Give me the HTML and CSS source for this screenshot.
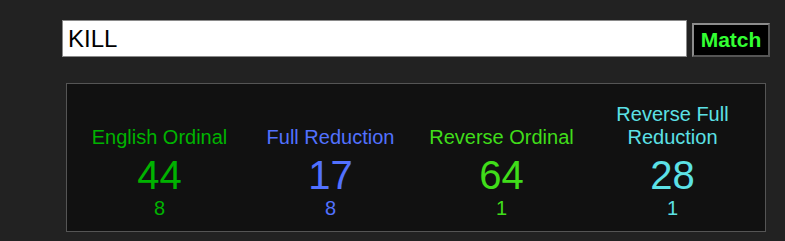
FILE: index.html
```html
<!DOCTYPE html>
<html>
<head>
<meta charset="utf-8">
<link rel="stylesheet" href="styles.css">
</head>
<body>
<div class="page">
  <form class="search">
    <input class="search-input" type="text" value="KILL">
    <button class="match-btn" type="button">Match</button>
  </form>
  <div class="results">
    <div class="grid">
      <div class="label c-eo">English Ordinal</div>
      <div class="label c-fr">Full Reduction</div>
      <div class="label c-ro">Reverse Ordinal</div>
      <div class="label c-rfr">Reverse Full Reduction</div>
      <div class="num c-eo">44</div>
      <div class="num c-fr">17</div>
      <div class="num c-ro">64</div>
      <div class="num c-rfr">28</div>
      <div class="sub c-eo">8</div>
      <div class="sub c-fr">8</div>
      <div class="sub c-ro">1</div>
      <div class="sub c-rfr">1</div>
    </div>
  </div>
</div>
</body>
</html>
```

FILE: styles.css
```css
html, body {
  margin: 0;
  padding: 0;
  background: #222222;
  font-family: "Liberation Sans", Arial, sans-serif;
}
.page {
  padding: 20px 0 0 0;
}
.search {
  display: flex;
  align-items: flex-start;
  margin: 0 0 0 62px;
}
.search-input {
  box-sizing: border-box;
  width: 625px;
  height: 37px;
  margin: 0;
  padding: 0 0 0 5px;
  border: 1px solid #8a8a8a;
  background: #ffffff;
  color: #000000;
  font-family: "Liberation Sans", Arial, sans-serif;
  font-size: 24px;
  outline: none;
}
.match-btn {
  box-sizing: border-box;
  width: 78px;
  height: 34px;
  margin: 3px 0 0 5px;
  padding: 0;
  background: #000000;
  color: #33ff33;
  border: 2px solid;
  border-color: #8c8c8c #555555 #555555 #8c8c8c;
  font-family: "Liberation Sans", Arial, sans-serif;
  font-weight: bold;
  font-size: 21px;
  line-height: 28px;
}
.results {
  box-sizing: border-box;
  width: 700px;
  height: 149px;
  margin: 26px 0 0 66px;
  border: 1px solid #555555;
  background: #111111;
  padding: 19px 0 0 0;
}
.grid {
  display: grid;
  grid-template-columns: repeat(4, 171px);
  justify-content: center;
  text-align: center;
}
.label {
  align-self: end;
  font-size: 20px;
  line-height: 23px;
  padding: 0 10px;
}
.num {
  font-size: 40px;
  line-height: 40px;
  margin-top: 6px;
}
.sub {
  font-size: 20px;
  line-height: 23px;
  margin-top: 2px;
}
.c-eo { color: #00b300; }
.c-fr { color: #5271ff; }
.c-ro { color: #40dd1a; }
.c-rfr { color: #5ce1e6; }
```
